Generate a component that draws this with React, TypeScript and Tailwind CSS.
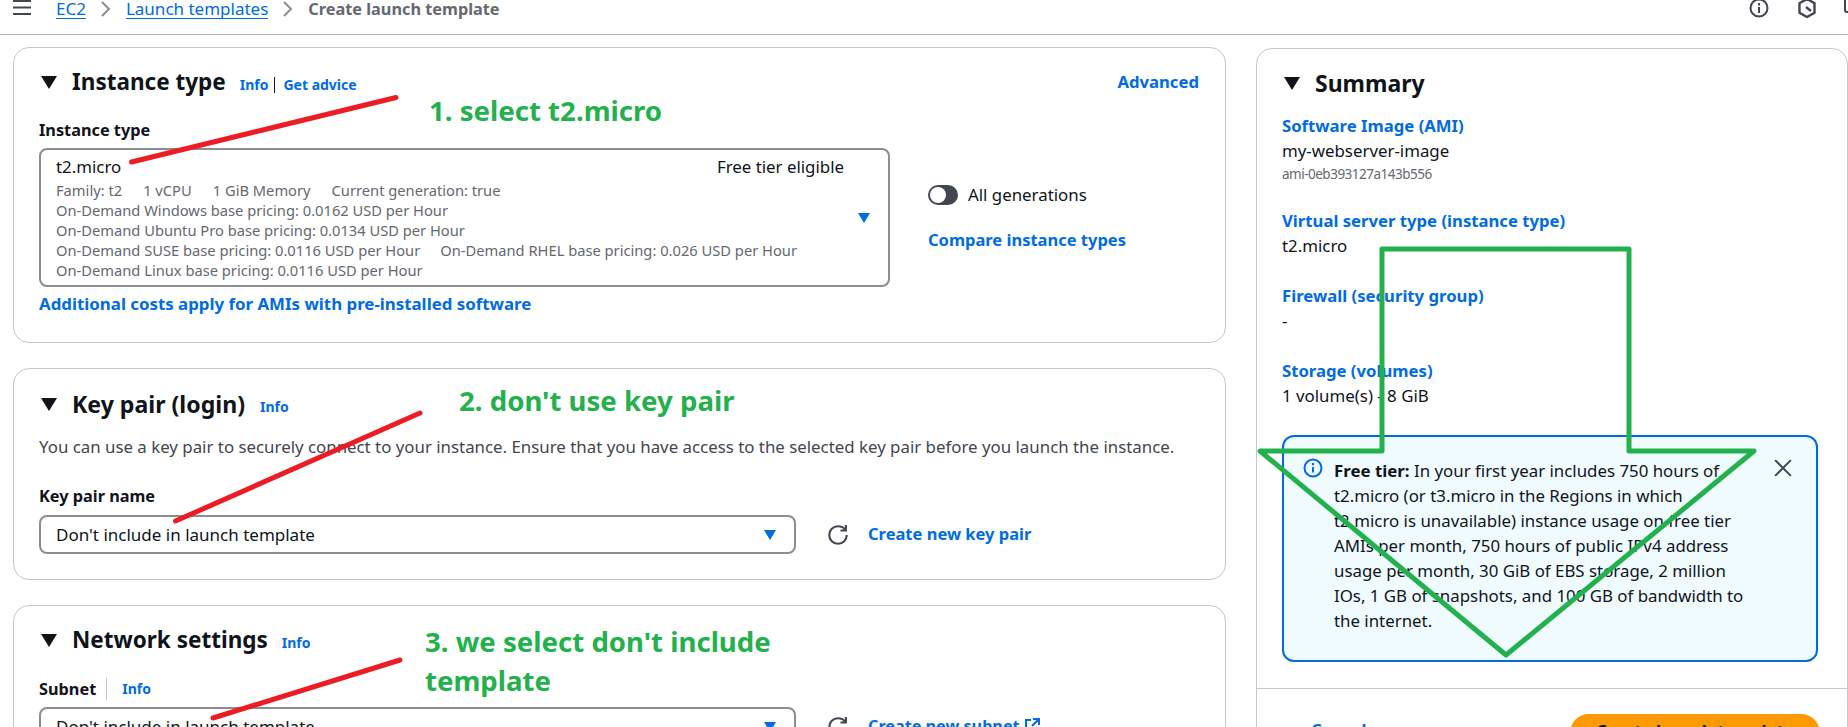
import type { ReactNode } from "react";

const Caret = ({ className = "" }: { className?: string }) => (
    <svg viewBox="0 0 12 10" className={`w-[12px] h-[10px] shrink-0 ${className}`}>
        <path d="M0 0h12L6 10z" fill="#006ce0" />
    </svg>
);

const Refresh = () => (
    <svg viewBox="0 0 16 16" fill="none" stroke="#424650" strokeWidth="1.7" className="w-[20px] h-[20px] shrink-0">
        <path d="M15 8c0 3.87-3.13 7-7 7s-7-3.13-7-7 3.13-7 7-7c2.79 0 4.8 1.4 6 3" />
        <path d="M14.3 0v4.4H10" />
    </svg>
);

const Section = ({
    title,
    info,
    infoGap = "ml-[15px]",
    size = "text-[22.5px]",
    extra,
}: {
    title: string;
    info?: boolean;
    infoGap?: string;
    size?: string;
    extra?: ReactNode;
}) => (
    <div className="flex items-center h-[28px]">
        <svg viewBox="0 0 16 13" className="w-[16px] h-[13px] ml-[2px] mr-[15px] shrink-0">
            <path d="M0 0h16L8 13z" fill="#0f141a" />
        </svg>
        <h2 className={`${size} leading-[28px] font-bold text-[#0f141a]`}>{title}</h2>
        {info && <a className={`${infoGap} mt-[6px] text-[14px] leading-[20px] font-bold text-[#006ce0]`}>Info</a>}
        {extra}
    </div>
);

const SelectBox = ({ value, width }: { value: string; width: string }) => (
    <div className={`flex items-center justify-between h-[39px] pl-[15px] pr-[18px] border-2 border-[#8c8c94] rounded-[8px] text-[17px] ${width}`}>
        <span>{value}</span>
        <Caret />
    </div>
);

const SummaryItem = ({ title, value, sub, gap = "mb-[28px]" }: { title: string; value: string; sub?: string; gap?: string }) => (
    <div className={gap}>
        <a className="block font-bold text-[16.7px] text-[#006ce0] leading-[22px]">{title}</a>
        <p className="mt-[3px] leading-[22px]">{value}</p>
        {sub && <p className="mt-[2px] text-[13.5px] tracking-[-0.5px] leading-[20px] text-[#656871]">{sub}</p>}
    </div>
);

const Note = ({ className, children }: { className: string; children: ReactNode }) => (
    <div className={`absolute font-bold text-[#22b14c] text-[27.6px] leading-[39px] ${className}`}>{children}</div>
);

export default function App() {
    return (
        <div className="relative h-[727px] overflow-hidden bg-white text-[16.85px] text-[#0f141a] font-['Noto_Sans',sans-serif]">
            {/* Top bar */}
            <header className="flex justify-between h-[35px] border-b border-[#b4b4bb] overflow-hidden">
                <div className="flex items-start leading-[18px] text-[17px]">
                    <svg viewBox="0 0 18 15" className="ml-[13px] w-[18px] h-[15px]">
                        <path d="M0 1h18M0 7.5h18M0 14h18" stroke="#424650" strokeWidth="2.2" />
                    </svg>
                    <a className="ml-[25px] text-[#006ce0] border-b border-[#006ce0]">EC2</a>
                    <svg viewBox="0 0 10 16" fill="none" stroke="#8c8c94" strokeWidth="2" className="ml-[15px] mt-px w-[10px] h-[16px]">
                        <path d="M1 1l7 7-7 7" />
                    </svg>
                    <a className="ml-[15px] text-[#006ce0] border-b border-[#006ce0]">Launch templates</a>
                    <svg viewBox="0 0 10 16" fill="none" stroke="#8c8c94" strokeWidth="2" className="ml-[15px] mt-px w-[10px] h-[16px]">
                        <path d="M1 1l7 7-7 7" />
                    </svg>
                    <span className="ml-[15px] text-[16.3px] font-bold text-[#656871]">Create launch template</span>
                </div>
                <div className="flex items-start -mr-[12px]">
                    <svg viewBox="0 0 20 20" fill="none" stroke="#424650" strokeWidth="2" className="w-[20px] h-[20px] -mt-[2px]">
                        <circle cx="10" cy="10" r="8.5" />
                        <path d="M10 9v6M10 5v2.4" />
                    </svg>
                    <svg viewBox="0 0 18 20" fill="none" stroke="#424650" strokeWidth="2.4" className="ml-[29px] w-[18px] h-[20px] -mt-[2px]">
                        <path d="M9 1l7.5 4.2v9.6L9 19l-7.5-4.2V5.2z" />
                        <path d="M8 9l5 4" />
                    </svg>
                    <svg viewBox="0 0 16 16" fill="none" stroke="#424650" strokeWidth="2" className="ml-[28px] w-[16px] h-[16px] -mt-[3px]">
                        <rect x="1" y="1" width="14" height="14" rx="2" />
                    </svg>
                </div>
            </header>

            <main className="flex items-start pl-[13px]">
                {/* Left column */}
                <div className="w-[1213px] shrink-0 pt-[12px] flex flex-col gap-[25px]">
                    <section className="h-[296px] border border-[#c6c6cd] rounded-[16px] pt-[20px] pl-[25px] pr-[26px]">
                        <div className="flex items-center justify-between">
                            <Section
                                title="Instance type"
                                info
                                infoGap="ml-[14px]"
                                extra={
                                    <span className="ml-[6px] mt-[6px] pl-[8px] border-l border-[#0f141a] text-[14px] leading-[16px] font-bold text-[#006ce0]">
                                        Get advice
                                    </span>
                                }
                            />
                            <a className="font-bold text-[16.7px] text-[#006ce0]">Advanced</a>
                        </div>
                        <p className="mt-[23px] font-bold leading-[22px] text-[16.3px]">Instance type</p>
                        <div className="flex mt-[7px]">
                            <div className="w-[851px] h-[139px] flex items-center pl-[15px] pr-[18px] border-2 border-[#8c8c94] rounded-[8px]">
                                <div className="flex-1 self-start pt-[6px] mr-[14px]">
                                    <div className="flex justify-between leading-[22px]">
                                        <span>t2.micro</span>
                                        <span>Free tier eligible</span>
                                    </div>
                                    <div className="mt-[2px] text-[14.7px] leading-[20px] text-[#656871]">
                                        <div className="flex gap-[21px]">
                                            <span>Family: t2</span>
                                            <span>1 vCPU</span>
                                            <span>1 GiB Memory</span>
                                            <span>Current generation: true</span>
                                        </div>
                                        <p>On-Demand Windows base pricing: 0.0162 USD per Hour</p>
                                        <p>On-Demand Ubuntu Pro base pricing: 0.0134 USD per Hour</p>
                                        <div className="flex gap-[20px]">
                                            <span>On-Demand SUSE base pricing: 0.0116 USD per Hour</span>
                                            <span>On-Demand RHEL base pricing: 0.026 USD per Hour</span>
                                        </div>
                                        <p>On-Demand Linux base pricing: 0.0116 USD per Hour</p>
                                    </div>
                                </div>
                                <Caret />
                            </div>
                            <div className="ml-[38px] pt-[36px]">
                                <div className="flex items-center h-[22px]">
                                    <span className="relative block w-[30px] h-[20px] rounded-full bg-[#424650]">
                                        <span className="absolute left-[2px] top-[2px] w-[16px] h-[16px] rounded-full bg-white" />
                                    </span>
                                    <span className="ml-[10px]">All generations</span>
                                </div>
                                <a className="block mt-[23px] leading-[22px] font-bold text-[16.5px] text-[#006ce0]">Compare instance types</a>
                            </div>
                        </div>
                        <a className="block mt-[6px] leading-[22px] font-bold text-[#006ce0]">Additional costs apply for AMIs with pre-installed software</a>
                    </section>

                    <section className="h-[212px] border border-[#c6c6cd] rounded-[16px] pt-[21px] pl-[25px] pr-[26px]">
                        <Section title="Key pair (login)" info infoGap="ml-[15px]" size="text-[23.1px]" />
                        <p className="mt-[18px] leading-[22px] text-[#424650]">
                            You can use a key pair to securely connect to your instance. Ensure that you have access to the selected key pair before you launch the instance.
                        </p>
                        <p className="mt-[27px] font-bold leading-[22px] text-[16.3px]">Key pair name</p>
                        <div className="flex items-center mt-[8px]">
                            <SelectBox value="Don't include in launch template" width="w-[757px]" />
                            <span className="ml-[32px]"><Refresh /></span>
                            <a className="ml-[20px] font-bold text-[16.5px] text-[#006ce0]">Create new key pair</a>
                        </div>
                    </section>

                    <section className="h-[212px] border border-[#c6c6cd] rounded-[16px] pt-[20px] pl-[25px] pr-[26px]">
                        <Section title="Network settings" info infoGap="ml-[14px]" />
                        <div className="flex items-center mt-[24px] leading-[22px]">
                            <span className="font-bold text-[16.3px] pr-[10px] border-r border-[#c6c6cd]">Subnet</span>
                            <a className="ml-[15px] text-[14px] font-bold text-[#006ce0]">Info</a>
                        </div>
                        <div className="flex items-center mt-[7px]">
                            <SelectBox value="Don't include in launch template" width="w-[757px]" />
                            <span className="ml-[32px]"><Refresh /></span>
                            <a className="ml-[20px] flex items-center gap-[4px] font-bold text-[16.2px] text-[#006ce0]">
                                Create new subnet
                                <svg viewBox="0 0 16 16" fill="none" stroke="#006ce0" strokeWidth="2" className="w-[16px] h-[16px]">
                                    <path d="M7 2H2v12h12V9M9 1h6v6M15 1L8 8" />
                                </svg>
                            </a>
                        </div>
                    </section>
                </div>

                {/* Summary */}
                <aside className="ml-[30px] mt-[13px] w-[592px] h-[800px] shrink-0 border border-[#c6c6cd] rounded-[16px] pt-[20px]">
                    <div className="px-[25px]">
                        <Section title="Summary" size="text-[23px]" />
                        <div className="mt-[18px]">
                            <SummaryItem title="Software Image (AMI)" value="my-webserver-image" sub="ami-0eb393127a143b556" gap="mb-[26px]" />
                            <SummaryItem title="Virtual server type (instance type)" value="t2.micro" />
                            <SummaryItem title="Firewall (security group)" value="-" />
                            <SummaryItem title="Storage (volumes)" value="1 volume(s) - 8 GiB" />
                        </div>
                        <div className="flex h-[227px] w-[536px] pt-[21px] pl-[19px] pr-[22px] border-2 border-[#006ce0] rounded-[12px] bg-[#f0fbff]">
                            <svg viewBox="0 0 20 20" fill="none" stroke="#006ce0" strokeWidth="2" className="w-[20px] h-[20px] shrink-0">
                                <circle cx="10" cy="10" r="8.5" />
                                <path d="M10 9v5.5M10 5v2.2" />
                            </svg>
                            <p className="ml-[11px] whitespace-nowrap leading-[25px]">
                                <b>Free tier:</b> In your first year includes 750 hours of
                                <br />
                                t2.micro (or t3.micro in the Regions in which
                                <br />
                                t2.micro is unavailable) instance usage on free tier
                                <br />
                                AMIs per month, 750 hours of public IPv4 address
                                <br />
                                usage per month, 30 GiB of EBS storage, 2 million
                                <br />
                                IOs, 1 GB of snapshots, and 100 GB of bandwidth to
                                <br />
                                the internet.
                            </p>
                            <svg viewBox="0 0 16 16" fill="none" stroke="#424650" strokeWidth="1.8" className="ml-auto mr-[2px] mt-[1px] w-[18px] h-[18px] shrink-0">
                                <path d="M1 1l14 14M15 1L1 15" />
                            </svg>
                        </div>
                    </div>
                    <div className="flex items-start justify-between mt-[26px] pt-[25px] pl-[54px] pr-[27px] border-t border-[#c6c6cd]">
                        <a className="mt-[5px] leading-[22px] font-bold text-[#006ce0]">Cancel</a>
                        <button className="w-[250px] h-[38px] pb-[4px] rounded-[20px] bg-[#ff9900] font-bold text-[#0f141a]">Create launch template</button>
                    </div>
                </aside>
            </main>

            {/* Hand-drawn annotations on top of the page */}
            <svg viewBox="0 0 1848 727" fill="none" className="absolute inset-0 w-[1848px] h-[727px] pointer-events-none">
                <g stroke="#ed1c24" strokeWidth="5" strokeLinecap="round">
                    <path d="M131.5 162L396 97.5" />
                    <path d="M175.5 521L420 413" />
                    <path d="M213 718L400 660" />
                </g>
                <path d="M1382 249H1629V451H1754L1506 655L1260 451H1382Z" stroke="#22b14c" strokeWidth="5" strokeLinejoin="round" />
            </svg>
            <Note className="left-[429px] top-[91px]">1. select t2.micro</Note>
            <Note className="left-[459px] top-[381px]">2. don't use key pair</Note>
            <Note className="left-[425px] top-[622px]">
                3. we select don't include
                <br />
                template
            </Note>
        </div>
    );
}
